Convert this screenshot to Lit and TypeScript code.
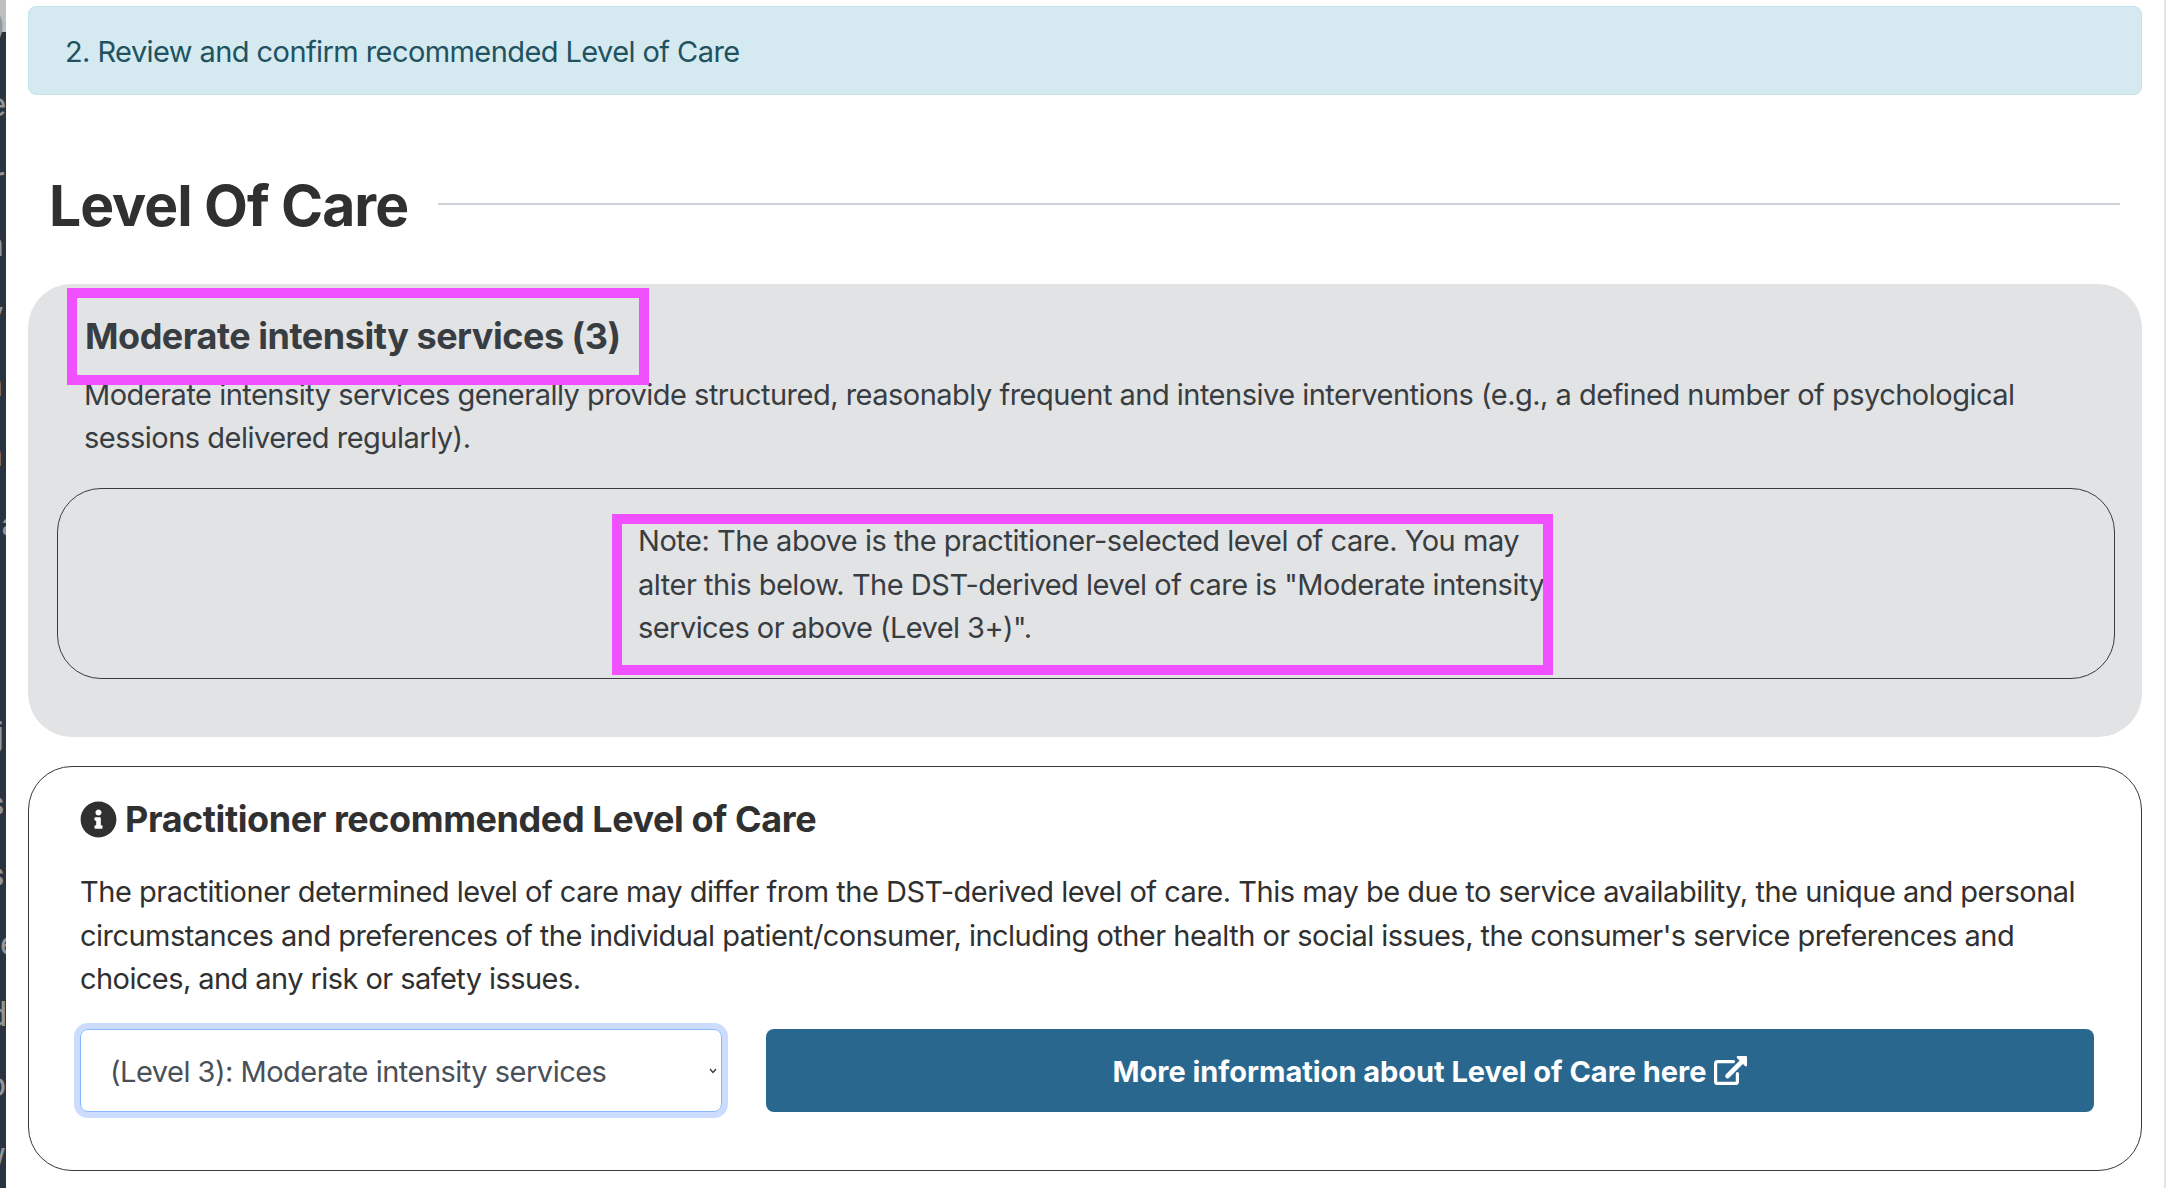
import { LitElement, html, css } from "lit";
import { customElement } from "lit/decorators.js";
import { styleMap } from "lit/directives/style-map.js";

interface Glyph {
  text: string;
  baseline: number;
  shift: number;
}

// Letters of the page behind the dialog, visible only at its left edge.
const BACKDROP: Glyph[] = [
  { text: ")", baseline: 36, shift: -7 },
  { text: "e", baseline: 116, shift: -12 },
  { text: "r", baseline: 190, shift: -7 },
  { text: "n", baseline: 256, shift: -15 },
  { text: "y", baseline: 325, shift: -13 },
  { text: "n", baseline: 396, shift: -16 },
  { text: "n", baseline: 466, shift: -16 },
  { text: "a", baseline: 536, shift: 1 },
  { text: "j", baseline: 745, shift: -4 },
  { text: "s", baseline: 815, shift: -13 },
  { text: "s", baseline: 886, shift: -13 },
  { text: "e", baseline: 955, shift: 0 },
  { text: "d", baseline: 1026, shift: -12 },
  { text: "p", baseline: 1096, shift: -13 },
  { text: "w", baseline: 1166, shift: -20 },
];

@customElement("backdrop-strip")
export class BackdropStrip extends LitElement {
  static styles = css`
    :host {
      display: block;
      flex: none;
      width: 6px;
      height: 1188px;
      overflow: hidden;
      background: linear-gradient(#bfc0be 0 32px, #2a3440 32px);
      font: 400 34px/40px Roboto, sans-serif;
      color: #94989c;
    }
    .row {
      display: flex;
      align-items: flex-end;
      opacity: 0.99;
    }
    .glyph {
      display: block;
      height: 32px;
      flex: none;
    }
  `;
  render() {
    return BACKDROP.map((g, i) => {
      const prev = i ? BACKDROP[i - 1].baseline : 0;
      return html`<div class="row" style=${styleMap({ height: `${g.baseline - prev}px` })}>
        <span class="glyph" style=${styleMap({ marginLeft: `${g.shift}px` })}>${g.text}</span>
      </div>`;
    });
  }
}

@customElement("app-root")
export class AppRoot extends LitElement {
  static styles = css`
    :host {
      display: flex;
      width: 2166px;
      height: 1188px;
      overflow: hidden;
      background: #fff;
      box-sizing: border-box;
      font-family: Inter, "Liberation Sans", sans-serif;
      font-size: 29px;
      line-height: 43.5px;
      letter-spacing: -0.51px;
      color: #303030;
    }
    * {
      box-sizing: border-box;
    }
    h1, h2, p {
      margin: 0;
    }
    .page {
      flex: 1;
      min-width: 0;
      display: flex;
      flex-direction: column;
      padding: 6px 22px 0;
      border-right: 2px solid #e4e4e6;
    }
    .banner {
      height: 89px;
      flex: none;
      display: flex;
      align-items: center;
      padding-left: 36px;
      padding-top: 2px;
      border: 1px solid #c3e4ea;
      border-radius: 8px;
      background: #d5e9f0;
      color: #20525f;
      letter-spacing: -0.58px;
    }
    .heading {
      height: 189px;
      flex: none;
      display: flex;
      align-items: center;
      padding: 30px 22px 0 21px;
    }
    .heading h1 {
      width: 389px;
      padding-top: 2px;
      font-size: 57px;
      line-height: 70px;
      font-weight: 700;
      letter-spacing: -1.02px;
      white-space: nowrap;
    }
    .rule {
      flex: 1;
      height: 2px;
      background: #ced4da;
      margin-bottom: 1px;
    }
    .summary {
      position: relative;
      height: 453px;
      flex: none;
      border-radius: 44px;
      background: #e2e3e5;
      color: #383d41;
      padding: 30px 27px 0 29px;
    }
    .summary h2 {
      padding-left: 28px;
      font-size: 36px;
      line-height: 44px;
      font-weight: 700;
      letter-spacing: -0.48px;
      white-space: nowrap;
    }
    .summary .text {
      height: 102px;
      padding: 15px 0 0 27px;
      line-height: 43px;
      white-space: nowrap;
    }
    .note {
      margin-top: 28px;
      height: 191px;
      border: 1px solid #383d41;
      border-radius: 44px;
      padding: 30px 0 0 580px;
      white-space: nowrap;
    }
    .note .line:nth-child(1) {
      letter-spacing: -0.47px;
    }
    .note .line:nth-child(2) {
      letter-spacing: -0.49px;
    }
    .note .line:nth-child(3) {
      letter-spacing: -0.56px;
    }
    .mark {
      position: absolute;
      border: 10px solid #f050ff;
    }
    .mark-title {
      left: 39px;
      top: 4px;
      width: 582px;
      height: 97px;
    }
    .mark-note {
      left: 584px;
      top: 230px;
      width: 941px;
      height: 161px;
    }
    .card {
      margin-top: 29px;
      height: 405px;
      flex: none;
      border: 1px solid #343a40;
      border-radius: 44px;
      padding: 30px 47px 0 51px;
    }
    .card h2 {
      display: flex;
      align-items: center;
      gap: 8px;
      font-size: 36px;
      line-height: 44px;
      font-weight: 700;
      letter-spacing: -0.43px;
      white-space: nowrap;
    }
    .info {
      width: 37px;
      height: 37px;
      flex: none;
    }
    .card .text {
      padding-top: 29px;
      white-space: nowrap;
    }
    .card .line:nth-child(1) {
      letter-spacing: -0.49px;
    }
    .card .line:nth-child(2) {
      letter-spacing: -0.53px;
    }
    .card .line:nth-child(3) {
      letter-spacing: -0.57px;
    }
    .actions {
      display: flex;
      gap: 44px;
      margin-top: 28px;
    }
    .select {
      width: 642px;
      height: 83px;
      display: flex;
      align-items: center;
      justify-content: space-between;
      padding: 3px 4px 0 29px;
      border: 1px solid #86b7fe;
      border-radius: 8px;
      box-shadow: 0 0 0 6px #cbdcff;
      color: #495057;
    }
    .chevron {
      width: 8px;
      height: 6px;
      margin-bottom: 1px;
    }
    .button {
      flex: 1;
      height: 83px;
      display: flex;
      align-items: center;
      justify-content: center;
      gap: 8px;
      padding-top: 3px;
      border-radius: 8px;
      background: #29678f;
      color: #fff;
      font-weight: 700;
      letter-spacing: -0.03px;
      white-space: nowrap;
    }
    .external {
      width: 33px;
      height: 29px;
      margin-bottom: 3px;
    }
    .line {
      display: block;
    }
  `;

  render() {
    return html`
      <backdrop-strip></backdrop-strip>
      <main class="page">
        <div class="banner"><span>2. Review and confirm recommended Level of Care</span></div>
        <div class="heading"><h1>Level Of Care</h1><div class="rule"></div></div>
        <section class="summary">
          <h2>Moderate intensity services (3)</h2>
          <p class="text">
            <span class="line">Moderate intensity services generally provide structured, reasonably frequent and intensive interventions (e.g., a defined number of psychological</span>
            <span class="line">sessions delivered regularly).</span>
          </p>
          <div class="note">
            <span class="line">Note: The above is the practitioner-selected level of care. You may</span>
            <span class="line">alter this below. The DST-derived level of care is "Moderate intensity</span>
            <span class="line">services or above (Level 3+)".</span>
          </div>
          <div class="mark mark-title"></div>
          <div class="mark mark-note"></div>
        </section>
        <section class="card">
          <h2>
            <svg class="info" viewBox="0 0 512 512" fill="currentColor"><path d="M256 8C119.043 8 8 119.083 8 256c0 136.997 111.043 248 248 248s248-111.003 248-248C504 119.083 392.957 8 256 8zm0 110c23.196 0 42 18.804 42 42s-18.804 42-42 42-42-18.804-42-42 18.804-42 42-42zm56 254c0 6.627-5.373 12-12 12h-88c-6.627 0-12-5.373-12-12v-24c0-6.627 5.373-12 12-12h12v-64h-12c-6.627 0-12-5.373-12-12v-24c0-6.627 5.373-12 12-12h64c6.627 0 12 5.373 12 12v100h12c6.627 0 12 5.373 12 12v24z"/></svg>
            <span>Practitioner recommended Level of Care</span>
          </h2>
          <p class="text">
            <span class="line">The practitioner determined level of care may differ from the DST-derived level of care. This may be due to service availability, the unique and personal</span>
            <span class="line">circumstances and preferences of the individual patient/consumer, including other health or social issues, the consumer's service preferences and</span>
            <span class="line">choices, and any risk or safety issues.</span>
          </p>
          <div class="actions">
            <div class="select">
              <span>(Level 3): Moderate intensity services</span>
              <svg class="chevron" viewBox="0 0 8 6" fill="none" stroke="#303438" stroke-width="1.200"><path d="M1 1 4 4.500 7 1"/></svg>
            </div>
            <div class="button">
              <span>More information about Level of Care here</span>
              <svg class="external" viewBox="0 0 33 29" fill="none" stroke="#fff" stroke-width="3.200"><path d="M19.500 5.600H3.600Q1.600 5.600 1.600 7.600V25.400Q1.600 27.400 3.600 27.400H21.400Q23.400 27.400 23.400 25.400V17.500" stroke-linecap="round"/><path d="M13.500 20 28 5.500" stroke-width="4.600" stroke-linecap="round"/><path d="M23.500 0H32Q33 0 33 1V9.500Q32.500 11 31 10L23 2Q22 .5 23.500 0Z" fill="#fff" stroke="none"/></svg>
            </div>
          </div>
        </section>
      </main>
    `;
  }
}
